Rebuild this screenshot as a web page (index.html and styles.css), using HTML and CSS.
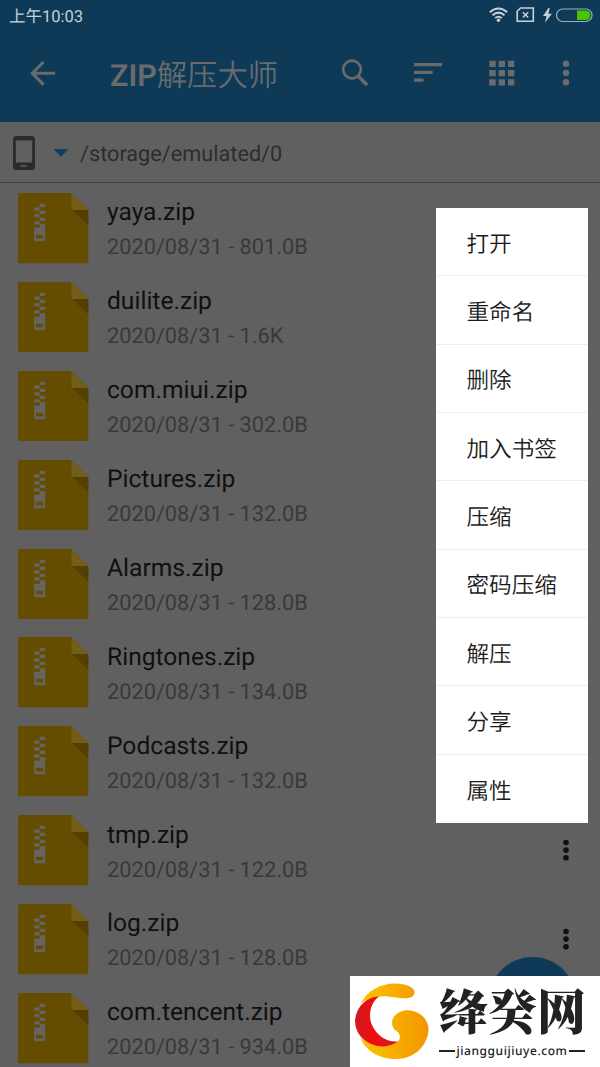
FILE: index.html
```html
<!DOCTYPE html>
<html lang="zh-CN">
<head>
<meta charset="utf-8">
<title>ZIP解压大师</title>
<link rel="stylesheet" href="styles.css">
</head>
<body>
<svg width="0" height="0" class="defs">
  <symbol id="zip" viewBox="0 0 70 70">
    <path fill="#644c00" d="M1.500 0H53L70 17V68.500Q70 70 68.500 70H1.500Q0 70 0 68.500V1.500Q0 0 1.500 0Z"/>
    <path fill="#735d1a" d="M53 0L70 17H54.500Q53 17 53 15.500Z"/>
    <path fill="#533f00" d="M54 17H70V32.500Z"/>
    <path fill="#666461" d="M21.500 10.700H27V14H21.500ZM16 14.300H21.500V17.600H16ZM21.500 17.600H27V20.900H21.500ZM16 21H21.500V24.300H16ZM21.500 24.500H27V27.800H21.500ZM16 28H21.500V31.300H16ZM21.500 31H27V47Q27 48 26 48H17Q16 48 16 47V34.500H21.500Z"/>
    <rect x="18" y="41.500" width="7" height="3.500" fill="#644c00"/>
  </symbol>
  <symbol id="dots" viewBox="0 0 8 28"><circle cx="4" cy="4.500" r="2.800"/><circle cx="4" cy="12.100" r="2.800"/><circle cx="4" cy="19.700" r="2.800"/></symbol>
</svg>
<div class="screen">
  <header class="top">
    <div class="status">
      <span class="clock">上午10:03</span>
      <svg class="status-icons" width="106" height="18" viewBox="0 0 106 18" fill="none" stroke="#c6d0d8">
        <path stroke-width="2" d="M.8 6.200Q9.500-1.300 18.200 6.200M3.500 9.300Q9.500 4 15.500 9.300M6.200 12.100Q9.500 9.300 12.800 12.100"/>
        <circle cx="9.500" cy="14.200" r="1.700" fill="#c6d0d8" stroke="none"/>
        <path stroke-width="1.600" d="M31.500 2H44.300V15.200H28.200V5.300Z"/>
        <path stroke-width="1.500" d="M33.800 6.200L39.200 11.500M39.200 6.200L33.800 11.500"/>
        <path fill="#c6d0d8" stroke="none" d="M59.500 2L54 10H57.500L56 16.500L63 7.800H59.300L60.800 2Z"/>
        <rect x="67.500" y="3" width="35.500" height="12.500" rx="6.250" stroke="#9cb0bd" stroke-width="1.200"/>
        <path fill="#4bc400" stroke="none" d="M88 4.500H97Q101.300 5 101.300 9.200T97 14H88Z"/>
      </svg>
    </div>
    <div class="toolbar">
      <svg class="back" width="26" height="26" viewBox="0 0 26 26" fill="none" stroke="#696b6c" stroke-width="3"><path d="M25 13.300H3M13.500 2L2.300 13.300L13.500 24.600"/></svg>
      <h1><b>ZIP</b>解压大师</h1>
      <svg class="search" width="28" height="28" viewBox="0 0 28 28" fill="none" stroke="#696b6c"><circle cx="11" cy="10.500" r="8.800" stroke-width="2.700"/><path stroke-width="3.300" d="M17.500 17.500L26 26"/></svg>
      <svg class="sort" width="28" height="20" viewBox="0 0 28 20" fill="#696b6c"><path d="M0 0H28V3.200H0ZM0 7.800H18.700V11H0ZM0 15.500H9.500V18.700H0Z"/></svg>
      <svg class="grid" width="26" height="26" viewBox="0 0 26 26" fill="#696b6c"><path d="M.3.700H6.700V7H.3ZM9.700.7H16V7H9.700ZM19 .7H25.300V7H19ZM.3 10H6.700V16.300H.3ZM9.700 10H16V16.300H9.700ZM19 10H25.300V16.300H19ZM.3 19.200H6.700V25.500H.3ZM9.700 19.200H16V25.500H9.700ZM19 19.200H25.300V25.500H19Z"/></svg>
      <svg class="more" width="8" height="28" viewBox="0 0 8 28" fill="#696b6c"><circle cx="4" cy="4.800" r="3.200"/><circle cx="4" cy="14" r="3.200"/><circle cx="4" cy="23.200" r="3.200"/></svg>
    </div>
  </header>
  <div class="path">
    <svg class="phone" width="22" height="34" viewBox="0 0 22 34"><path fill="#2a2a2a" fill-rule="evenodd" d="M3.500 0H18.500Q22 0 22 3.500V30.500Q22 34 18.500 34H3.500Q0 34 0 30.500V3.500Q0 0 3.500 0ZM2.800 4.500V26.500H19.200V4.500Z"/><rect x="7.500" y="29.200" width="6.500" height="1.500" fill="#606060"/></svg>
    <svg class="caret" width="16" height="8" viewBox="0 0 16 8"><path fill="#0e3f64" d="M.5 0H15.500L8 7.700Z"/></svg>
    <span class="route">/storage/emulated/0</span>
  </div>
  <main class="list">
    <div class="row"><svg class="file"><use href="#zip"/></svg><div class="info"><div class="name">yaya.zip</div><div class="meta">2020/08/31 - 801.0B</div></div></div>
    <div class="row"><svg class="file"><use href="#zip"/></svg><div class="info"><div class="name">duilite.zip</div><div class="meta">2020/08/31 - 1.6K</div></div></div>
    <div class="row"><svg class="file"><use href="#zip"/></svg><div class="info"><div class="name">com.miui.zip</div><div class="meta">2020/08/31 - 302.0B</div></div></div>
    <div class="row"><svg class="file"><use href="#zip"/></svg><div class="info"><div class="name">Pictures.zip</div><div class="meta">2020/08/31 - 132.0B</div></div></div>
    <div class="row"><svg class="file"><use href="#zip"/></svg><div class="info"><div class="name">Alarms.zip</div><div class="meta">2020/08/31 - 128.0B</div></div></div>
    <div class="row"><svg class="file"><use href="#zip"/></svg><div class="info"><div class="name">Ringtones.zip</div><div class="meta">2020/08/31 - 134.0B</div></div></div>
    <div class="row"><svg class="file"><use href="#zip"/></svg><div class="info"><div class="name">Podcasts.zip</div><div class="meta">2020/08/31 - 132.0B</div></div></div>
    <div class="row"><svg class="file"><use href="#zip"/></svg><div class="info"><div class="name">tmp.zip</div><div class="meta">2020/08/31 - 122.0B</div></div><svg class="dots"><use href="#dots"/></svg></div>
    <div class="row"><svg class="file"><use href="#zip"/></svg><div class="info"><div class="name">log.zip</div><div class="meta">2020/08/31 - 128.0B</div></div><svg class="dots"><use href="#dots"/></svg></div>
    <div class="row"><svg class="file"><use href="#zip"/></svg><div class="info"><div class="name">com.tencent.zip</div><div class="meta">2020/08/31 - 934.0B</div></div></div>
  </main>
  <div class="fab"></div>
  <nav class="menu">
    <div class="item">打开</div><div class="item">重命名</div><div class="item">删除</div><div class="item">加入书签</div><div class="item">压缩</div><div class="item">密码压缩</div><div class="item">解压</div><div class="item">分享</div><div class="item">属性</div>
  </nav>
  <aside class="brand">
    <svg class="logo" width="76" height="78" viewBox="0 0 76 78">
      <defs>
        <linearGradient id="gold" x1="0" x2="1"><stop offset="0" stop-color="#fdc400"/><stop offset="1" stop-color="#f39500"/></linearGradient>
        <linearGradient id="red" x1="0" x2="1"><stop offset="0" stop-color="#cf1a25"/><stop offset=".45" stop-color="#f00d0d"/><stop offset="1" stop-color="#cf1a25"/></linearGradient>
      </defs>
      <path fill="url(#gold)" d="M5 21C12 8 25 .5 40 .5C51 .5 59.500 4 59.500 9.500C59.500 14.500 53 16 45 15C37 14 30 12 23 14C14 16 8 18 5 21ZM43 58.500C47 53 44 49.500 40 47C36 43 36 36 40.500 32C46 26 56 26 63 30C71 34 75 42 73 51C70 65 58 76 41 76C23 76 10 67 5 54C15 63 32 66 43 58.500Z"/>
      <path fill="url(#red)" d="M24 13.500C15 20 13 33 17 42C22 53 32 59.500 43 58.500C37 63 28 65 19 62C8 59 0 49 0 38C1 24 11 14 24 13.500Z"/>
    </svg>
    <div class="brand-text"><div class="brand-name">绛癸网</div><div class="domain"><i></i><span>jiangguijiuye.com</span><i></i></div></div>
  </aside>
</div>
</body>
</html>
```
FILE: styles.css
```css
* { box-sizing: border-box; }
body { margin: 0; background: #606060; font-family: Roboto, "Noto Sans CJK SC", sans-serif; text-rendering: geometricPrecision; }
svg { display: block; flex: none; }
.defs { position: absolute; }
.screen { position: relative; width: 600px; height: 1067px; overflow: hidden; background: #606060; }
.top { height: 122px; background: #0e3a58; }
.status { display: flex; justify-content: space-between; height: 32px; padding: 0 5px 0 9px; }
.clock { padding-top: 1px; font-size: 16.500px; line-height: 33px; color: #c6d0d8; white-space: nowrap; }
.status-icons { margin-top: 6px; }
.toolbar { display: flex; align-items: center; height: 82px; }
.back { margin-left: 30px; }
.toolbar h1 { width: 176px; margin: 8px 0 0 54px; font-size: 30.400px; line-height: 40px; font-weight: 350; color: #696b6c; white-space: nowrap; }
.toolbar b { font-weight: 600; }
.search { margin-left: 55px; }
.sort { margin-left: 45px; }
.grid { margin-left: 47px; }
.more { margin-left: 47px; }
.path { display: flex; align-items: center; height: 61px; padding-left: 13px; border-bottom: 1px solid #444; }
.phone, .caret { position: relative; top: 1px; }
.caret { margin-left: 18px; }
.route { margin: 4px 0 0 11px; font-size: 21.700px; color: #2d2d2d; }
.list { padding-top: 10px; }
.row { display: flex; height: 88.900px; padding-left: 18px; }
.file { width: 70.500px; height: 70.500px; }
.info { width: 440px; padding-top: .3px; margin-left: 18.500px; }
.name { height: 38px; font-size: 24.600px; line-height: 40px; color: #101010; white-space: nowrap; }
.meta { font-size: 21.750px; line-height: 33px; color: #393939; white-space: nowrap; }
.dots { width: 8px; height: 28px; margin: 23px 0 0 15px; fill: #101010; }
.fab { position: absolute; left: 489px; top: 957px; width: 87px; height: 87px; border-radius: 50%; background: #0e3a58; box-shadow: 0 1px 3px #0002; }
.menu { position: absolute; left: 435.500px; top: 208px; width: 152.500px; height: 615px; display: grid; grid-template-rows: repeat(9, 1fr); background: #fff; color: #1b1b1b; }
.item { display: flex; align-items: center; padding: 1px 0 0 31px; font-size: 22.600px; font-weight: 350; white-space: nowrap; border-bottom: 1px solid #eee; }
.item:last-child { border: 0; }
.brand { position: absolute; left: 350px; top: 976px; width: 250px; height: 91px; display: flex; padding: 7px 0 0 5px; background: #fff; color: #222; }
.brand-text { width: 146px; margin-left: 8px; }
.brand-name { height: 58px; font-family: "Noto Serif CJK SC", "Noto Sans CJK SC", serif; font-size: 49px; font-weight: 900; line-height: 54px; white-space: nowrap; }
.domain { display: flex; align-items: center; gap: 2px; height: 20px; font: 500 12px/20px "Noto Sans", sans-serif; letter-spacing: .55px; }
.domain i { flex: 1; height: 2px; background: #222; }
```
